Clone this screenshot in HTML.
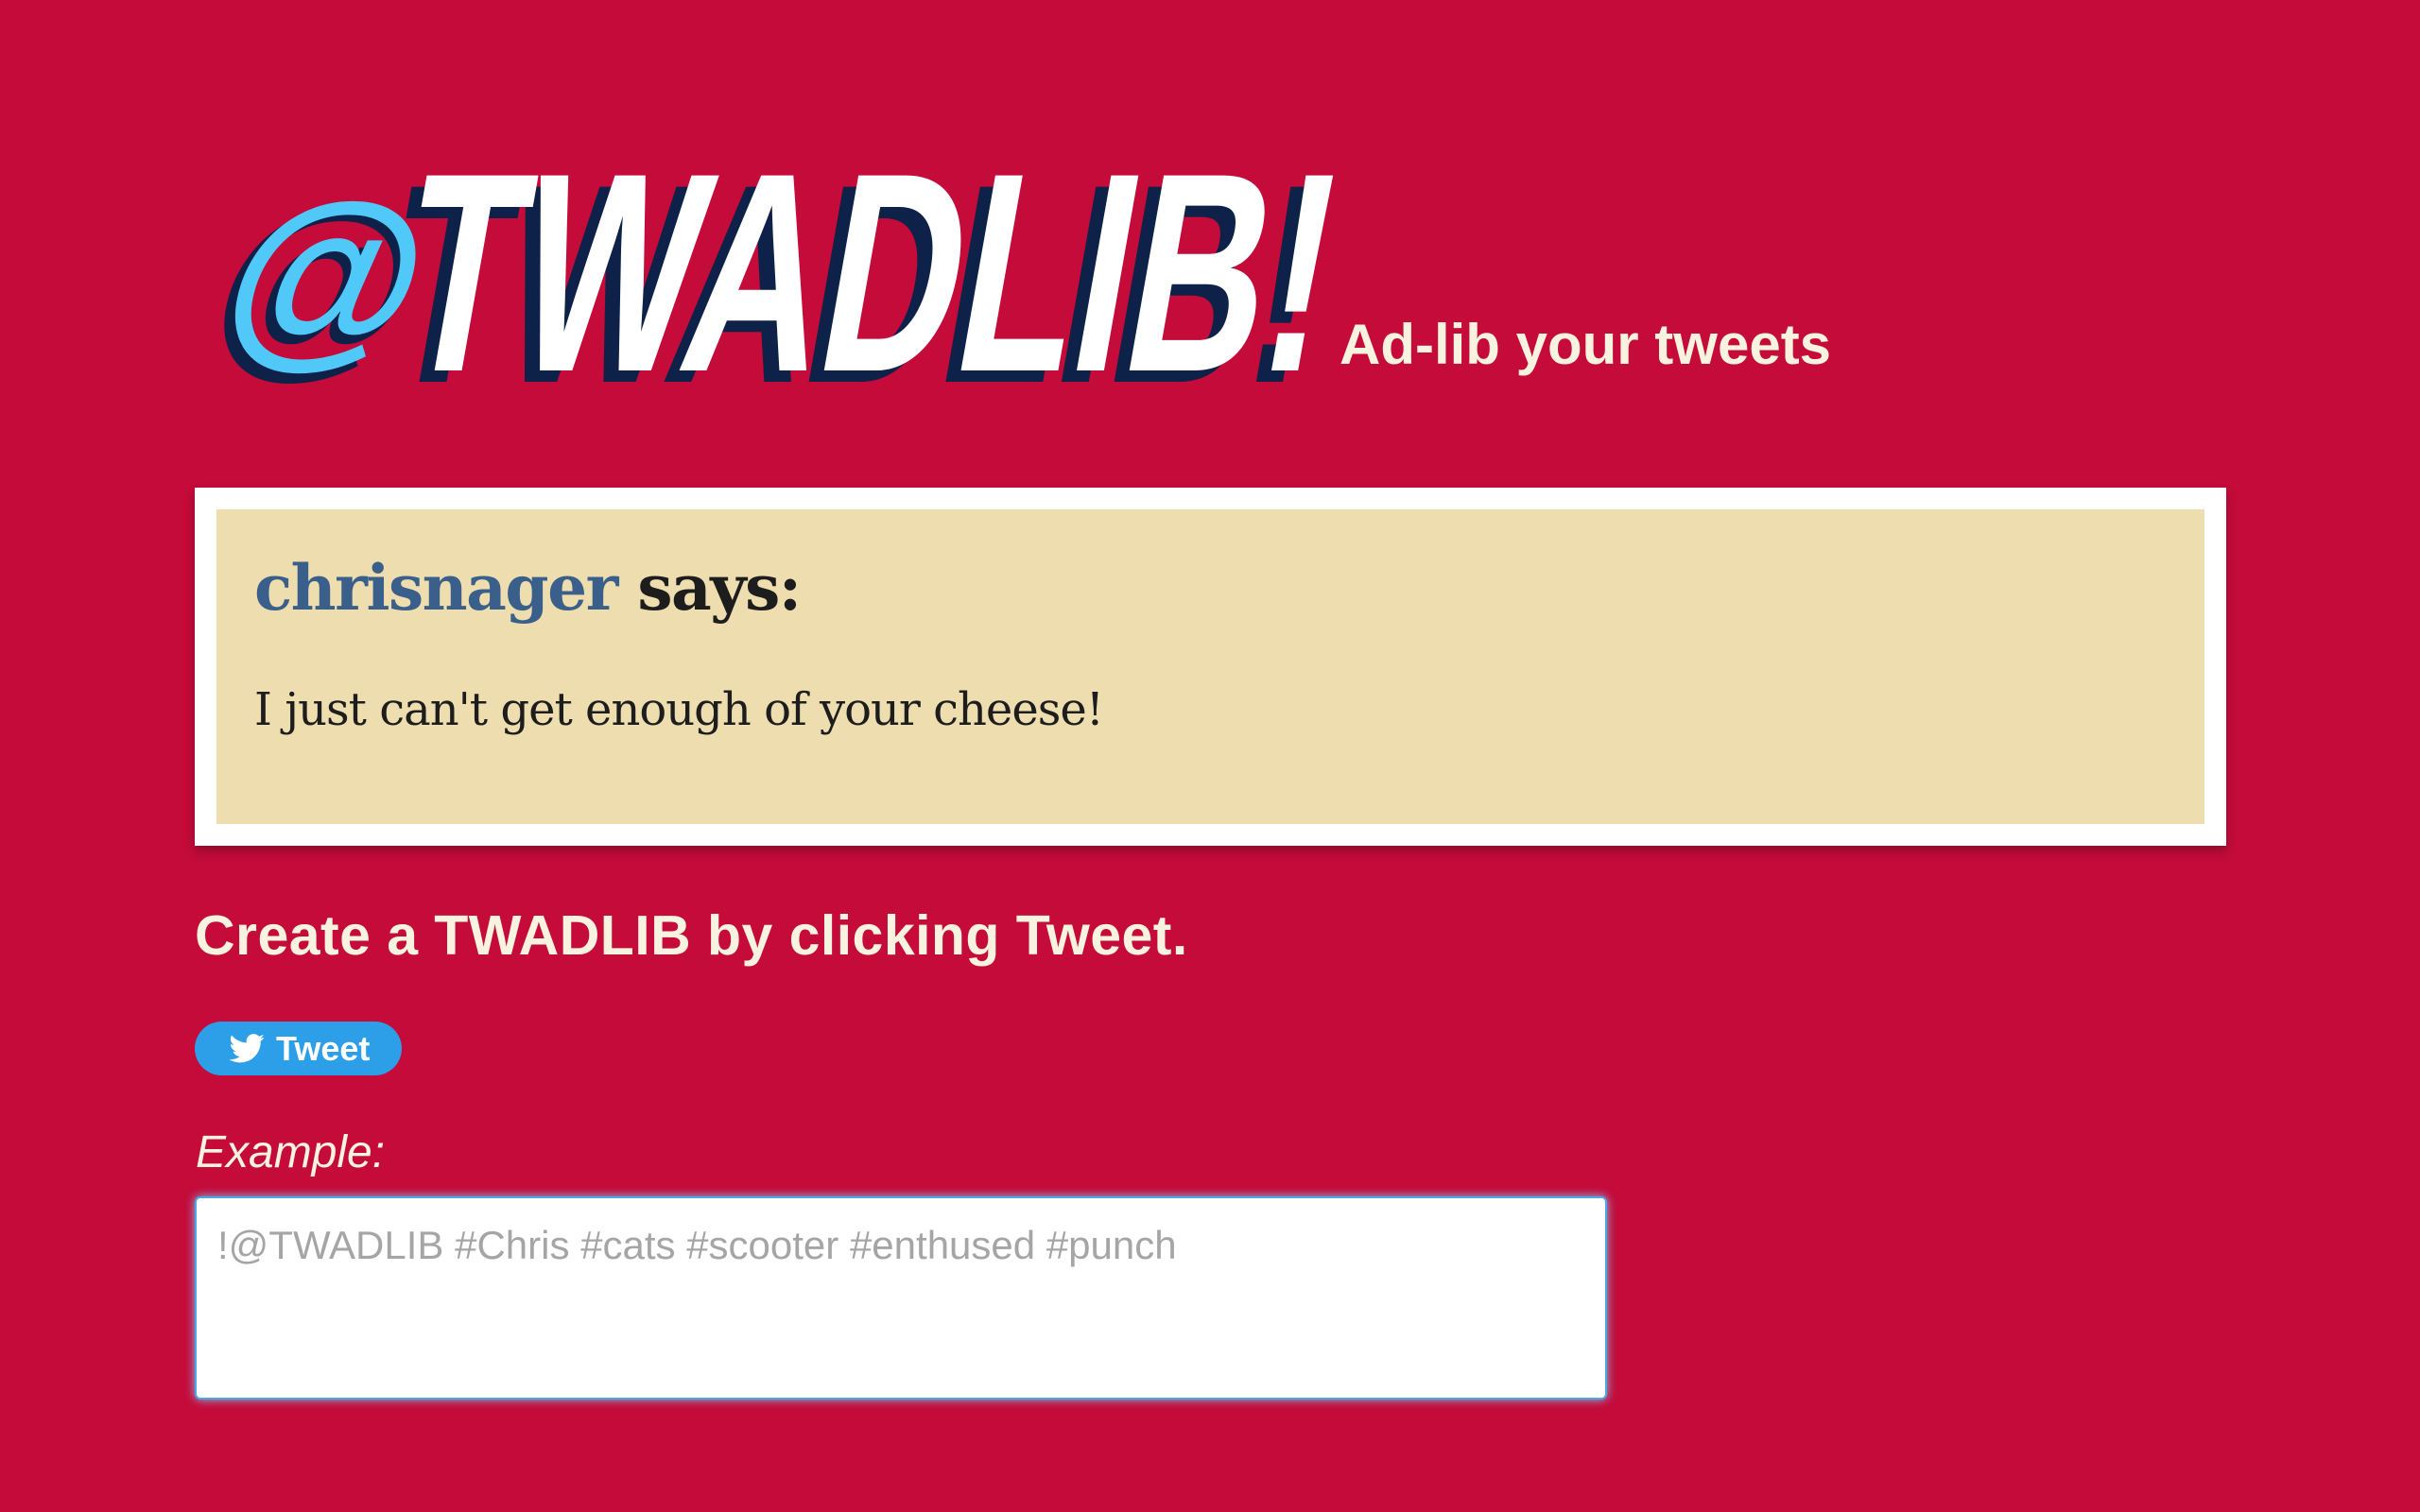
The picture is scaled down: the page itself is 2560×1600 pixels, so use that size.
<!DOCTYPE html>
<html><head><meta charset="utf-8"><style>
html,body{margin:0;padding:0;background:#c40b3a;width:2560px;height:1600px;overflow:hidden;font-family:"Liberation Sans",Arial,sans-serif}
.logo{position:absolute;left:0;top:0}
.tag{position:absolute;left:1417px;top:330px;font-size:60px;font-weight:bold;color:#f7f3e0;letter-spacing:0px}
.card{position:absolute;left:206px;top:516px;width:2103px;height:333px;border:23px solid #fff;background:#eedeaf;box-shadow:0 6px 10px rgba(0,0,0,.25)}
.card h2{margin:0;position:absolute;left:40px;top:44px;font-family:"DejaVu Serif","Liberation Serif",serif;font-size:66px;font-weight:bold;color:#1d1d1d;letter-spacing:-1.5px}
.card h2 span{color:#3a5f8a}
.card p{margin:0;position:absolute;left:40px;top:184px;font-family:"DejaVu Serif","Liberation Serif",serif;font-size:48px;color:#1d1d1d;letter-spacing:-1px}
.create{position:absolute;left:206px;top:956px;font-size:59px;font-weight:bold;color:#f7f3e0;letter-spacing:0.45px}
.btn{position:absolute;left:206px;top:1081px;width:219px;height:57px;border-radius:29px;background:#2c9fe8;color:#fff;font-size:36px;font-weight:bold}
.btn svg{position:absolute;left:36px;top:13px}
.btn span{position:absolute;left:86px;top:8px}
.ex{position:absolute;left:207px;top:1192px;font-size:48px;font-style:italic;color:#f7f3e0}
.ta{position:absolute;left:206px;top:1266px;width:1490px;height:211px;background:#fff;border:2px solid #4aa8e8;border-radius:6px;box-shadow:0 0 10px #7cc7f5}
.ta span{position:absolute;left:22px;top:26px;font-size:42px;color:#a5a5a5;letter-spacing:0px}
</style></head><body>
<svg class="logo" width="1500" height="450" viewBox="0 0 1500 450">
<text x="218" y="372" font-family="Liberation Sans" font-weight="bold" font-size="215" fill="#0e2148" transform="skewX(-12) translate(78,0)">@</text>
<text x="230" y="362" font-family="Liberation Sans" font-weight="bold" font-size="210" fill="#50c8f8" transform="skewX(-12) translate(76,0)">@</text>
<text x="398" y="404" font-family="Liberation Sans Narrow,Liberation Sans" font-weight="bold" font-size="300" fill="#0e2148" textLength="980" lengthAdjust="spacingAndGlyphs" transform="skewX(-10) translate(70,0)">TWADLIB!</text>
<text x="412" y="392" font-family="Liberation Sans Narrow,Liberation Sans" font-weight="bold" font-size="300" fill="#fff" textLength="980" lengthAdjust="spacingAndGlyphs" transform="skewX(-10) translate(70,0)">TWADLIB!</text>
</svg>
<div class="tag">Ad-lib your tweets</div>
<div class="card"><h2><span>chrisnager</span> says:</h2><p>I just can't get enough of your cheese!</p></div>
<div class="create">Create a TWADLIB by clicking Tweet.</div>
<div class="btn"><svg width="38" height="31" viewBox="0 0 24 20"><path fill="#fff" d="M24 2.4c-.9.4-1.8.6-2.8.8 1-.6 1.8-1.6 2.2-2.7-1 .6-2 1-3.1 1.2C19.4.7 18.1.1 16.7.1c-2.7 0-4.9 2.2-4.9 4.9 0 .4 0 .8.1 1.1C7.8 5.9 4.2 4 1.7 1 1.3 1.7 1 2.6 1 3.5c0 1.7.9 3.2 2.2 4.1-.8 0-1.6-.2-2.2-.6v.1c0 2.4 1.7 4.4 3.9 4.8-.4.1-.8.2-1.3.2-.3 0-.6 0-.9-.1.6 2 2.4 3.4 4.6 3.4-1.7 1.3-3.8 2.1-6.1 2.1-.4 0-.8 0-1.2-.1 2.2 1.4 4.8 2.2 7.5 2.2 9.1 0 14-7.5 14-14v-.6c1-.7 1.8-1.6 2.5-2.6z"/></svg><span>Tweet</span></div>
<div class="ex">Example:</div>
<div class="ta"><span>!@TWADLIB #Chris #cats #scooter #enthused #punch</span></div>
</body></html>
